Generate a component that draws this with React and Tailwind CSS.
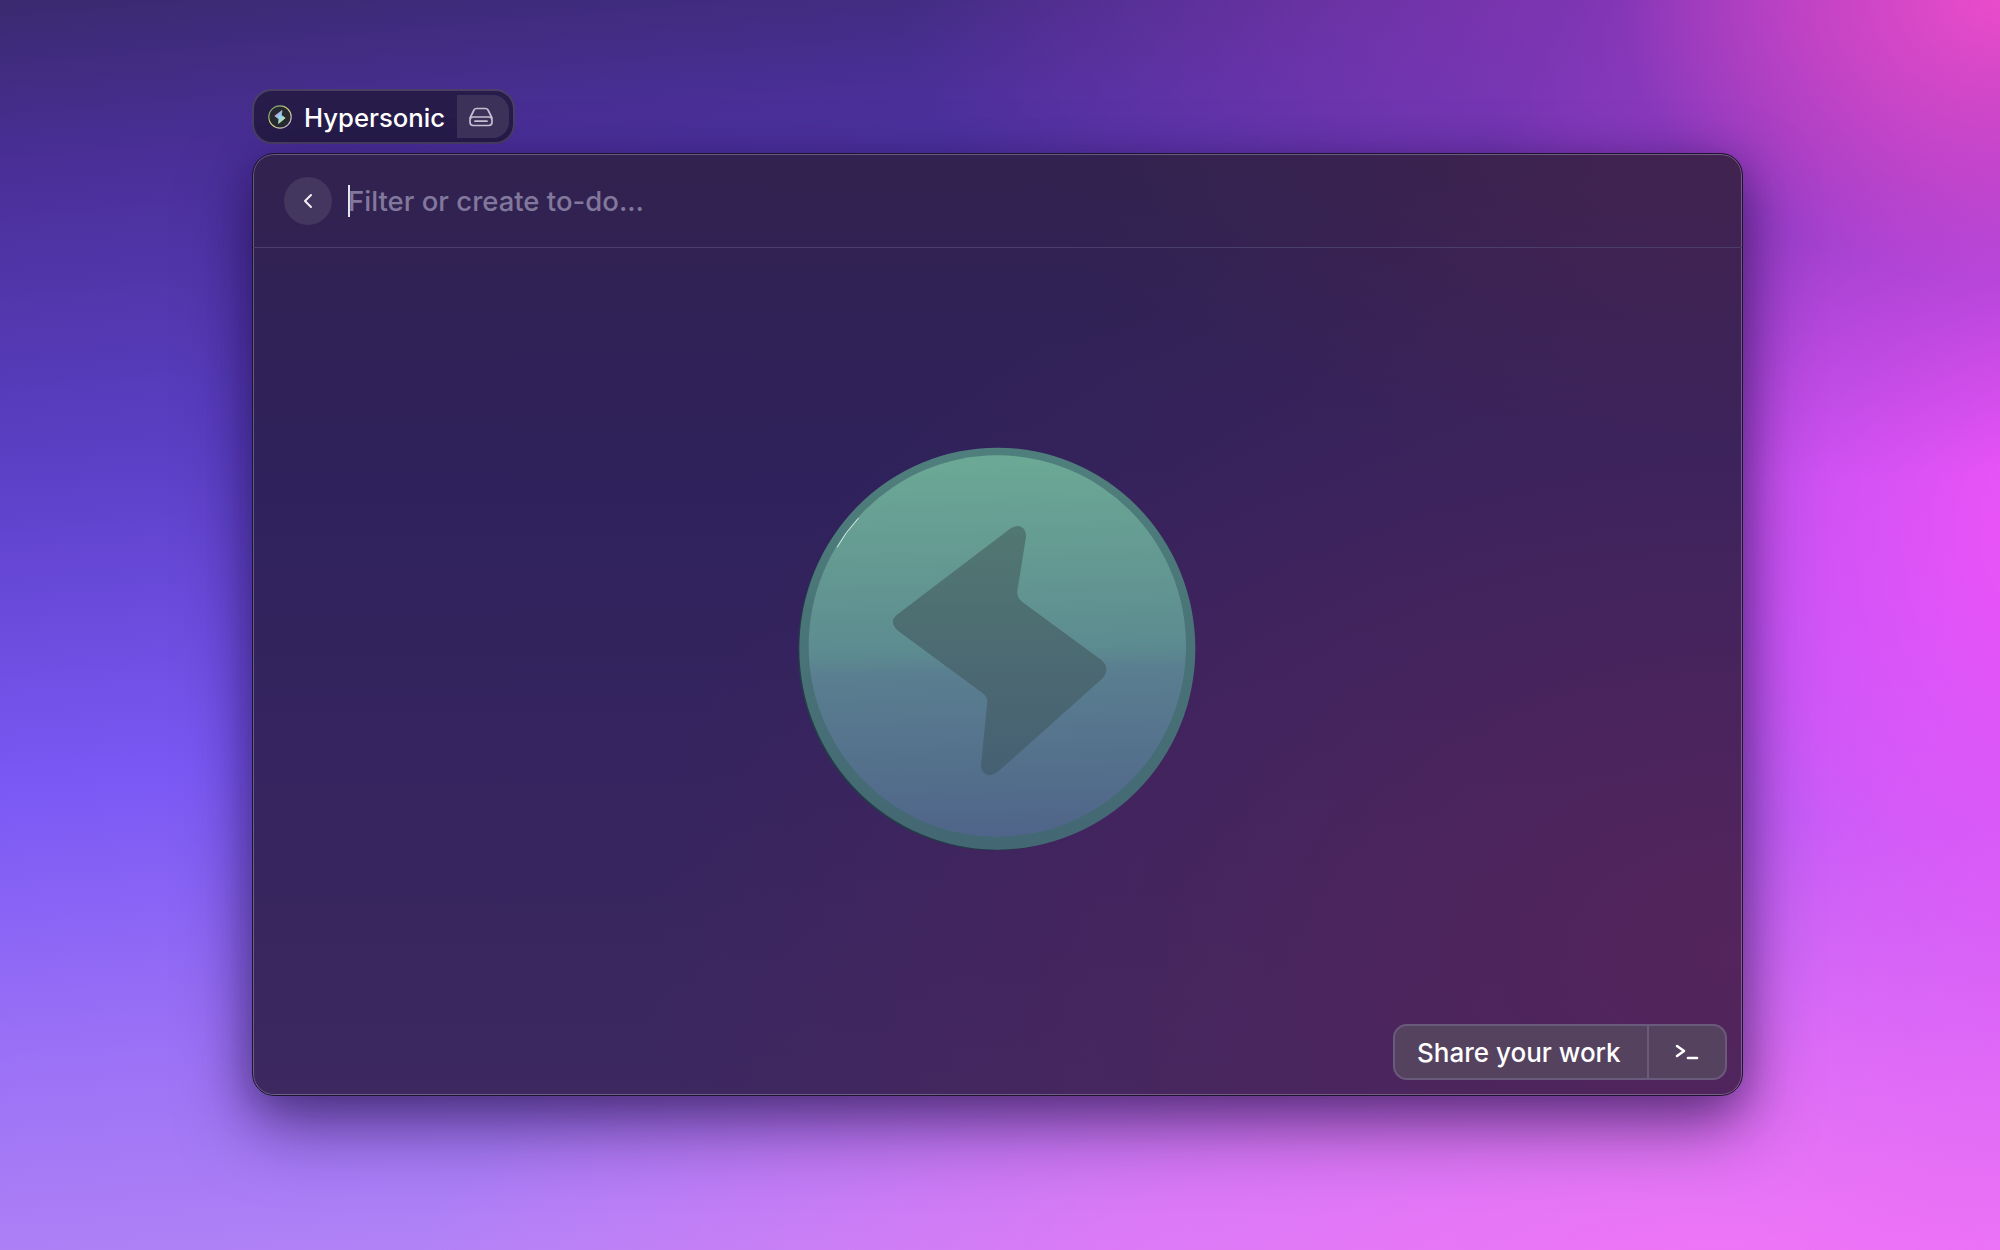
export default function App() {
  return (
    <div className="w-full h-[1250px] overflow-hidden pl-[252px] pt-[89px] font-['Inter',sans-serif] bg-[radial-gradient(ellipse_380px_280px_at_100%_0%,#ea4cca_0%,rgba(234,76,202,0.55)_50%,rgba(234,76,202,0)_100%),radial-gradient(ellipse_900px_480px_at_90%_0%,rgba(146,56,190,0.95)_0%,rgba(146,56,190,0.5)_50%,rgba(146,56,190,0)_100%),radial-gradient(ellipse_640px_800px_at_103%_42%,#f053f8_0%,rgba(240,83,248,0.7)_45%,rgba(240,83,248,0)_100%),radial-gradient(ellipse_1350px_480px_at_88%_104%,#f272f6_0%,rgba(242,114,246,0.6)_50%,rgba(242,114,246,0)_100%),linear-gradient(175deg,#3a2a70_0%,#4a2f98_12%,#5a3fc4_32%,#7a58f4_55%,#9c72f6_75%,#bf8df6_100%)]">
      <div className="flex h-[55px] w-[263px] items-stretch overflow-hidden rounded-[20px] border-2 border-[#4a4066] bg-[#271c4a] p-[4px]">
        <div className="flex flex-1 items-center pl-[9px]">
          <svg width="26" height="26" viewBox="0 0 26 26">
            <defs>
              <linearGradient id="ring" x1="0" y1="0" x2="1" y2="1">
                <stop offset="0" stopColor="#5f8a7c" />
                <stop offset="0.5" stopColor="#d8d878" />
                <stop offset="1" stopColor="#b0a0e8" />
              </linearGradient>
              <linearGradient id="mini" x1="0" y1="0" x2="1" y2="1">
                <stop offset="0" stopColor="#f07ad8" />
                <stop offset="0.5" stopColor="#8ad8f0" />
                <stop offset="1" stopColor="#f0e070" />
              </linearGradient>
            </defs>
            <circle cx="13" cy="13" r="11.2" fill="#26292e" stroke="url(#ring)" strokeWidth="1.2" />
            <path d="M15 6.5 L7.8 12 L12 15 L11.5 19.5 L18.2 14 L14.2 11.2 Z" fill="url(#mini)" stroke="url(#mini)" strokeLinejoin="round" strokeWidth="0.8" />
          </svg>
          <span className="ml-[11px] pt-[2px] text-[25.7px] leading-none font-[450] text-white">Hypersonic</span>
        </div>
        <div className="flex w-[52px] items-center justify-center rounded-r-[16px] bg-[#3b3159] pr-[4px]">
          <svg width="26" height="22" viewBox="0 0 26 22" fill="none" stroke="#c4bfd2" strokeWidth="1.7" strokeLinejoin="round" strokeLinecap="round">
            <path d="M2 12 L6 4 Q6.8 2.5 8.5 2.5 H17.5 Q19.2 2.5 20 4 L24 12" />
            <rect x="2" y="11" width="22" height="8.5" rx="3.2" />
            <path d="M7 15.2 H19" />
          </svg>
        </div>
      </div>
      <div className="mt-[9px] flex h-[943px] w-[1491px] flex-col rounded-[22px] border border-[#1c1430] bg-[radial-gradient(ellipse_1100px_800px_at_100%_85%,#54245c_0%,rgba(84,36,92,0)_100%),radial-gradient(ellipse_700px_300px_at_100%_0%,rgba(70,35,80,0.8)_0%,rgba(70,35,80,0)_100%),linear-gradient(180deg,#31224f_0%,#2f225c_35%,#35245f_65%,#3d2860_100%)] shadow-[inset_0_0_0_1px_rgba(255,255,255,0.26),0_10px_40px_rgba(25,10,60,0.35),0_30px_70px_rgba(25,10,60,0.5)]">
        <div className="flex h-[94px] shrink-0 items-center border-b border-[#4a3e6a] pl-[31px]">
          <button className="flex h-[48px] w-[48px] items-center justify-center rounded-full bg-[#43365f]">
            <svg width="16" height="18" viewBox="0 0 16 18" fill="none" stroke="#f2f0f6" strokeWidth="2" strokeLinecap="round" strokeLinejoin="round">
              <path d="M11 3 L5 9 L11 15" />
            </svg>
          </button>
          <div className="ml-[16px] flex items-center">
            <span className="h-[32px] w-[2px] bg-[#e8e4f0]" />
            <span className="-ml-[2px] pt-[2px] text-[27.5px] leading-none font-[450] text-[#82789c]">Filter or create to-do...</span>
          </div>
        </div>
        <div className="relative flex-1 pt-[183px]">
          <div className="flex justify-center pr-[6px]">
            <svg width="430" height="430" viewBox="0 0 1290 1290">
              <defs>
                <linearGradient id="face" gradientUnits="userSpaceOnUse" x1="640" y1="75" x2="670" y2="1225">
                  <stop offset="0" stopColor="#6ca995" />
                  <stop offset="0.5" stopColor="#5d8c90" />
                  <stop offset="0.56" stopColor="#5a7f90" />
                  <stop offset="1" stopColor="#4f6489" />
                </linearGradient>
                <linearGradient id="rim" x1="0" y1="0" x2="0" y2="1">
                  <stop offset="0" stopColor="#4f7f7c" />
                  <stop offset="1" stopColor="#436773" />
                </linearGradient>
                <linearGradient id="bolt" gradientUnits="userSpaceOnUse" x1="640" y1="285" x2="640" y2="1035">
                  <stop offset="0" stopColor="#527872" />
                  <stop offset="0.6" stopColor="#4b6872" />
                  <stop offset="1" stopColor="#466073" />
                </linearGradient>
              </defs>
              <ellipse cx="644" cy="658" rx="590" ry="600" fill="#243c48" />
              <ellipse cx="652" cy="653" rx="594" ry="603" fill="url(#rim)" />
              <ellipse cx="652" cy="645" rx="566" ry="572" fill="url(#face)" />
              <path d="M690 293 Q712 278 730 292 Q740 302 738 318 L712 480 Q710 500 728 514 L965 688 Q992 712 968 742 L652 1024 Q632 1040 612 1026 Q602 1018 603 1002 L622 812 Q622 798 610 788 L352 598 Q326 572 350 552 Z" fill="url(#bolt)" />
              <path d="M172 348 Q195 305 235 262" fill="none" stroke="#d8ece4" strokeWidth="3" strokeLinecap="round" />
            </svg>
          </div>
          <div className="absolute bottom-[15px] right-[15px] flex h-[56px] w-[334px] items-stretch overflow-hidden rounded-[14px] border-2 border-[#6a5a7c] bg-[#54425f]">
            <div className="flex w-[252px] items-center pl-[22px] text-[26px] font-[550] text-white">Share your work</div>
            <div className="flex flex-1 items-center justify-center border-l-2 border-[#6a5a7c]">
              <svg width="24" height="18" viewBox="0 0 24 18" fill="none" stroke="#ffffff" strokeWidth="2.6" strokeLinecap="round" strokeLinejoin="round">
                <path d="M2 3 L9 8 L2 13" />
                <path d="M13 15 H22" />
              </svg>
            </div>
          </div>
        </div>
      </div>
    </div>
  );
}
